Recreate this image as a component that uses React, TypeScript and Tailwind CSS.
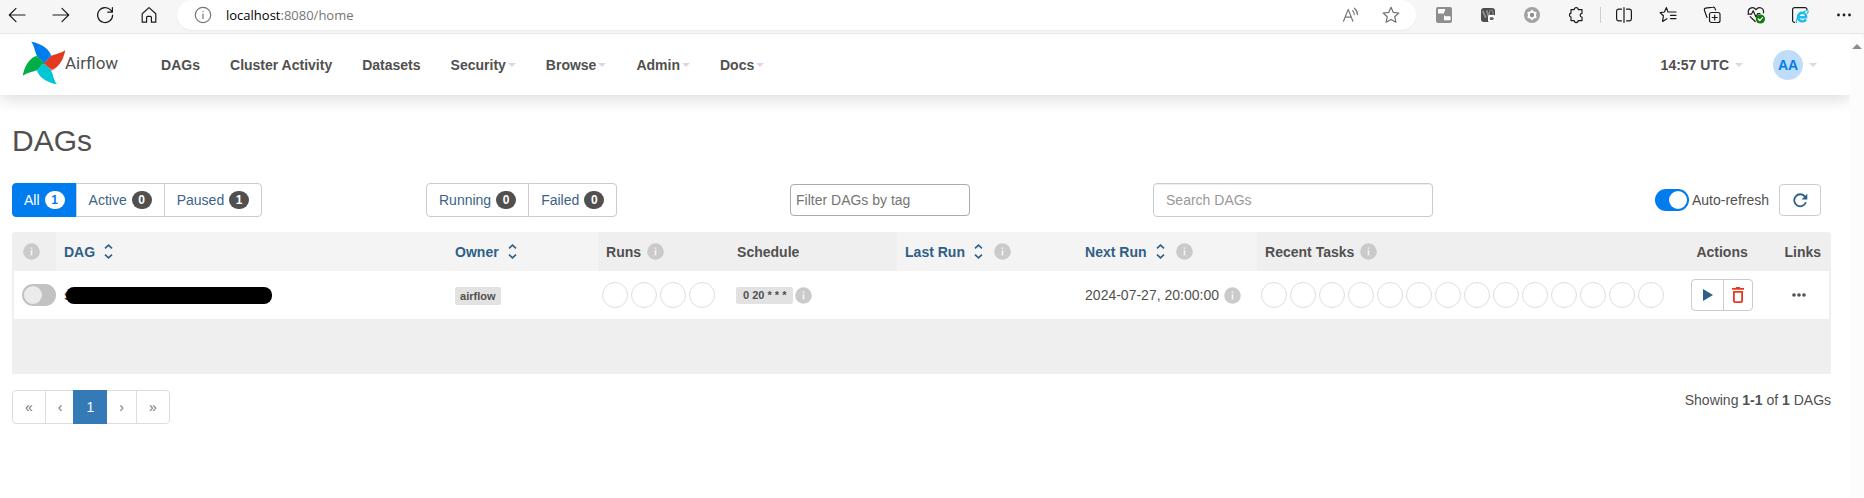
import React from "react";

const caretColor = "#e3d3e6";

function Caret() {
  return (
    <svg width="8" height="4" viewBox="0 0 8 4" aria-hidden="true">
      <path d="M0 0H8L4 4Z" fill={caretColor} />
    </svg>
  );
}

function Info() {
  return (
    <svg width="17" height="17" viewBox="0 0 17 17" className="shrink-0" aria-hidden="true">
      <circle cx="8.5" cy="8.5" r="8.3" fill="#cacaca" />
      <path d="M7.7 4.4h1.6v1.6H7.7zM7.7 7.2h1.6v5.2H7.7z" fill="#f4f4f4" />
    </svg>
  );
}

function SortIcon() {
  return (
    <svg width="9" height="15" viewBox="0 0 9 15" fill="none" stroke="#2f5f86" strokeWidth="1.6" aria-hidden="true">
      <path d="M1 4.4 4.5 1.2 8 4.4M1 10.6 4.5 13.8 8 10.6" />
    </svg>
  );
}

function Pinwheel() {
  const blades = [
    { angle: 0, dark: "#017cee", light: "#11a7fb" },
    { angle: 90, dark: "#e43921", light: "#ff7557" },
    { angle: 180, dark: "#00c7d4", light: "#0fdcea" },
    { angle: 270, dark: "#00ad46", light: "#04d659" },
  ];
  return (
    <svg width="44" height="44" viewBox="-22 -22 44 44" aria-hidden="true">
      {blades.map((b) => (
        <path key={b.angle} transform={`rotate(${b.angle})`} d="M0 0C3 -2.5 5 -5.5 6.2 -9.4C8.8 -6.5 8.8 -3.4 7.4 -0.8Z" fill={b.light} />
      ))}
      {blades.map((b) => (
        <path key={b.angle} transform={`rotate(${b.angle})`} d="M0 0C-1.5 -3.2 -5 -4 -7 -7.2C-9.2 -11 -9 -15.5 -12.7 -21.2C-5 -20 3.5 -15.6 6.4 -9.2C6 -6 3.4 -3 0 0Z" fill={b.dark} />
      ))}
      <circle r="0.8" fill="#51504f" />
    </svg>
  );
}

function NavItem({ label, menu }: { label: string; menu?: boolean }) {
  return (
    <a href="#" className="flex items-center gap-0.5 px-[15px]">
      {label}
      {menu && <Caret />}
    </a>
  );
}

function Badge({ n, active }: { n: number; active?: boolean }) {
  return (
    <span
      className={
        active
          ? "flex h-[18px] min-w-5 items-center justify-center rounded-full bg-white text-xs font-bold text-[#017cee]"
          : "flex h-[18px] min-w-5 items-center justify-center rounded-full bg-[#51504f] text-xs font-bold text-white"
      }
    >
      {n}
    </span>
  );
}

function FilterGroup({ items }: { items: { label: string; n: number; active?: boolean }[] }) {
  return (
    <div className="inline-flex h-[34px]">
      {items.map((it) => (
        <a
          href="#"
          key={it.label}
          className={
            it.active
              ? "flex items-center gap-[5px] rounded-l border border-[#017cee] bg-[#017cee] px-[11px] text-white"
              : "-ml-px flex items-center gap-[5px] border border-[#ccc] px-3 text-[#3b6486] first:ml-0 first:rounded-l last:rounded-r"
          }
        >
          {it.label}
          <Badge n={it.n} active={it.active} />
        </a>
      ))}
    </div>
  );
}

function Circles({ count }: { count: number }) {
  return (
    <div className="flex gap-[3px]">
      {Array.from({ length: count }, (_, i) => (
        <span key={i} className="size-[26px] shrink-0 rounded-full border border-[#dedede]" />
      ))}
    </div>
  );
}

function SortHead({ label, info }: { label: string; info?: boolean }) {
  return (
    <th className="bg-[#f4f4f4] px-2 text-left">
      <a href="#" className="flex items-center text-[#2f5f86]">
        <span className="mr-[9px]">{label}</span>
        <SortIcon />
        {info && <span className="ml-[11px]"><Info /></span>}
      </a>
    </th>
  );
}

function Glyph({ children, label, color = "#1b1b1b" }: { children: React.ReactNode; label: string; color?: string }) {
  return (
    <button aria-label={label} className="shrink-0">
      <svg width="18" height="18" viewBox="0 0 18 18" fill="none" stroke={color} strokeWidth="1.2" strokeLinejoin="round" strokeLinecap="round">
        {children}
      </svg>
    </button>
  );
}

function BrowserBar() {
  return (
    <div className="flex h-[34px] items-start border-b border-[#e8e8e8] bg-[#f6f6f6]">
      <div className="flex h-[30px] items-center gap-[26px] pl-2">
        <Glyph label="Back"><path d="M17 9H1.5M8 2.3 1.3 9 8 15.7" /></Glyph>
        <Glyph label="Forward"><path d="M1 9H16.5M10 2.3 16.7 9 10 15.7" /></Glyph>
        <Glyph label="Reload"><path d="M16.6 9A7.5 7.5 0 1 1 14.8 4.2L16.2 6M16.4 1.6V6.2H11.8" /></Glyph>
        <Glyph label="Home"><path d="M2.2 7.8 9 1.6 15.8 7.8V16.2H11.4V11.4A1 1 0 0 0 10.4 10.4H7.6A1 1 0 0 0 6.6 11.4V16.2H2.2Z" /></Glyph>
      </div>
      <div className="ml-[19px] mr-1.5 flex h-[30px] grow items-center rounded-[15px] bg-white pl-[17px] pr-4 shadow-xs">
        <Glyph label="Site information" color="#757575"><circle cx="9" cy="9" r="7.7" /><path d="M9 8V12.6M9 5.4V5.6" /></Glyph>
        <div className="ml-3.5 grow font-['Open_Sans',sans-serif] text-[13px] text-[#767676]">
          <span className="text-black">localhost</span>:8080/home
        </div>
        <div className="flex gap-[22px]">
          <Glyph label="Read aloud" color="#767676"><path d="M1.5 15.2 6.2 3.4 10.9 15.2M3 11.2H9.4M10.6 4.6A5 5 0 0 1 12.2 8.6M12.4 2.2A8 8 0 0 1 15.4 8.6" /></Glyph>
          <Glyph label="Add to favorites" color="#707070"><path d="M9 1.3 11.3 6.4 16.8 7 12.7 10.7 13.9 16.2 9 13.4 4.1 16.2 5.3 10.7 1.2 7 6.7 6.4Z" /></Glyph>
        </div>
      </div>
      <div className="flex h-[30px] items-center">
        <div className="flex w-11 justify-center">
          <Glyph label="Screen extension" color="none"><rect x="1" y="1" width="16" height="16" rx="2" fill="#8e8e8e" /><path d="M3 3h7v2.5h-1v2H3zM9 9.5h1v.8h5.5v4H9z" fill="#fff" /></Glyph>
        </div>
        <div className="flex w-11 justify-center">
          <Glyph label="Video extension" color="none"><rect x="2" y="2" width="14" height="14" rx="3" fill="#4d4d4d" /><path d="M4 5.5 6.4 11M8 5 9.4 10" stroke="#8c8c8c" strokeWidth="2" /><ellipse cx="12.2" cy="7" rx="1.8" ry="3" stroke="#8c8c8c" /><rect x="9" y="9" width="7.5" height="7" rx="1.5" fill="#fff" /><path d="M10.8 11.2h3l1.3 1.3-1.3 1.4h-3z" fill="#666" /></Glyph>
        </div>
        <div className="flex w-11 justify-center">
          <Glyph label="Gear extension" color="none"><circle cx="9" cy="9" r="8" fill="#a3a3a3" /><path d="M9 4.5 10.6 6.1 13 6.6 12.3 9 13 11.4 10.6 11.9 9 13.5 7.4 11.9 5 11.4 5.7 9 5 6.6 7.4 6.1Z" fill="#fff" stroke="#fff" /><circle cx="9" cy="9" r="2.2" fill="#8e8e8e" /></Glyph>
        </div>
        <div className="flex w-11 justify-center">
          <Glyph label="Extensions"><path d="M4 3.6H7.2A2 2 0 0 1 11.2 3.6H15V7.3A1.6 1.6 0 1 0 15 11V14.6H11.2A2 2 0 0 1 7.2 14.6H4V11A2 2 0 0 1 4 7.1Z" /></Glyph>
        </div>
        <div className="flex w-1 justify-center"><span className="h-4 w-px bg-[#cfcfcf]" /></div>
        <div className="flex w-11 justify-center">
          <Glyph label="Split screen"><path d="M6.5 3.2H3.5A2 2 0 0 0 1.6 5.2V12.8A2 2 0 0 0 3.5 14.8H6.5M11.5 3.2H14.5A2 2 0 0 1 16.4 5.2V12.8A2 2 0 0 1 14.5 14.8H11.5M9 1.5V16.5" /></Glyph>
        </div>
        <div className="flex w-11 justify-center">
          <Glyph label="Favorites"><path d="M10 6H17M11.5 9.3H17M11.5 12.6H17M9 6 7.4 1.6 5.4 6 1.2 6.7 4.4 9.8 3.6 15.4 8 12.8" /></Glyph>
        </div>
        <div className="flex w-11 justify-center">
          <Glyph label="Collections"><rect x="6.5" y="6.5" width="10.5" height="10" rx="2" /><path d="M11.7 9V14M9.2 11.5H14.2M4 11.5 1.4 4.3A1.8 1.8 0 0 1 2.5 2.1L10 1.2A1.8 1.8 0 0 1 12 2.4L12.6 4" /></Glyph>
        </div>
        <div className="flex w-11 justify-center">
          <Glyph label="Browser essentials"><path d="M1.5 7.5C0 2 6 0 9 3.6C12 0 17.5 2 16.4 6.8M3.2 10.6 8.2 15.5M1 8.2H4.4L6.2 4.8 9 11 10.8 7.6H13" /><circle cx="13.4" cy="13" r="4.6" fill="#107c10" stroke="none" /><path d="M11.3 13 12.8 14.5 15.5 11.7" stroke="#fff" /></Glyph>
        </div>
        <div className="flex w-11 justify-center">
          <Glyph label="Internet Explorer mode"><path d="M3.6 16.4A2 2 0 0 1 1.6 14.4V3.6A2 2 0 0 1 3.6 1.6H14A2 2 0 0 1 16 3.6" /><path d="M7.2 11.2H15.2C15.2 5.4 7 5.4 7 11C7 16 13.4 16.4 15 13.4" stroke="#1ebbee" strokeWidth="2.4" strokeLinecap="butt" /><path d="M5.4 16.6C4.8 11.5 12 4 17 4.8C17.4 5.4 17 6.6 16.4 7.4" stroke="#1ebbee" strokeWidth="1.1" /></Glyph>
        </div>
        <div className="flex w-[42px] justify-center">
          <Glyph label="More" color="none"><g fill="#1b1b1b"><circle cx="4.5" cy="9" r="1.4" /><circle cx="10" cy="9" r="1.4" /><circle cx="15.5" cy="9" r="1.4" /></g></Glyph>
        </div>
      </div>
    </div>
  );
}

const pages = ["«", "‹", "1", "›", "»"];

export default function App() {
  return (
    <div className="flex min-h-screen flex-col bg-[#f6f6f6] font-['Liberation_Sans',Arial,sans-serif] text-sm leading-5 text-[#51504f]">
      <BrowserBar />
      <div className="flex grow overflow-hidden rounded-tr-md bg-white">
        <div className="min-w-0 grow">
          <header className="flex h-[61px] items-center bg-white pl-[22px] pr-[33px] font-bold shadow-[0_5px_14px_rgba(0,0,0,0.13)]">
            <a href="#" className="mb-1 mr-7 flex items-center font-['Roboto',sans-serif] text-[17px] font-normal">
              <Pinwheel />
              <span className="-ml-px">Airflow</span>
            </a>
            <nav className="flex">
              <NavItem label="DAGs" />
              <NavItem label="Cluster Activity" />
              <NavItem label="Datasets" />
              <NavItem label="Security" menu />
              <NavItem label="Browse" menu />
              <NavItem label="Admin" menu />
              <NavItem label="Docs" menu />
            </nav>
            <div className="ml-auto flex items-center gap-[30px]">
              <button className="flex items-center gap-1.5 font-bold">14:57 UTC <Caret /></button>
              <button className="flex items-center gap-1.5 font-bold">
                <span className="flex size-[30px] items-center justify-center rounded-full bg-[#bfddfb] text-[#017cee]">AA</span>
                <Caret />
              </button>
            </div>
          </header>

          <main className="pl-3 pr-[19px] pt-7">
            <h1 className="text-[30px] leading-9">DAGs</h1>

            <div className="mt-6 grid grid-cols-[414fr_364fr_363fr_678fr] items-center">
              <div className="flex"><FilterGroup items={[{ label: "All", n: 1, active: true }, { label: "Active", n: 0 }, { label: "Paused", n: 1 }]} /></div>
              <div className="flex"><FilterGroup items={[{ label: "Running", n: 0 }, { label: "Failed", n: 0 }]} /></div>
              <input aria-label="Filter DAGs by tag" placeholder="Filter DAGs by tag" className="h-8 w-[180px] rounded border border-[#aaa] px-[5px] placeholder:text-[#757575]" />
              <div className="flex items-center">
                <input aria-label="Search DAGs" placeholder="Search DAGs" className="h-[34px] w-[280px] rounded border border-[#ccc] px-3 shadow-[inset_0_1px_1px_rgba(0,0,0,0.075)] placeholder:text-[#999]" />
                <label className="ml-auto flex items-center gap-[3px]">
                  <input type="checkbox" defaultChecked className="flex h-[22px] w-[34px] appearance-none items-center justify-end rounded-full bg-[#017cee] px-0.5 before:size-[18px] before:rounded-full before:bg-white before:content-['']" />
                  Auto-refresh
                </label>
                <button aria-label="Refresh" className="mx-2.5 flex h-8 w-[42px] items-center justify-center rounded border border-[#ccc]">
                  <svg width="15" height="15" viewBox="0 0 15 15" fill="none" stroke="#2f5f86" strokeWidth="1.8">
                    <path d="M12.9 9.3A6 6 0 1 1 12 3.6" />
                    <path d="M14.3 0.8V6.5H8.6Z" fill="#2f5f86" stroke="none" />
                  </svg>
                </button>
              </div>
            </div>

            <div className="mt-[15px] overflow-hidden rounded-t bg-[#efefef] pb-[55px]">
              <table className="w-full table-fixed border-separate border-spacing-0 border-x-2 border-[#efefef]">
                <colgroup>
                  <col className="w-[42px]" />
                  <col />
                  <col className="w-[151px]" />
                  <col className="w-[131px]" />
                  <col className="w-[168px]" />
                  <col className="w-[180px]" />
                  <col className="w-[180px]" />
                  <col className="w-[426px]" />
                  <col className="w-[78px]" />
                  <col className="w-[68px]" />
                </colgroup>
                <thead>
                  <tr className="h-[39px]">
                    <th className="pl-[9px]"><Info /></th>
                    <SortHead label="DAG" />
                    <SortHead label="Owner" />
                    <th className="px-2"><div className="flex items-center gap-1.5">Runs <Info /></div></th>
                    <th className="px-2 text-left">Schedule</th>
                    <SortHead label="Last Run" info />
                    <SortHead label="Next Run" info />
                    <th className="px-2"><div className="flex items-center gap-1.5">Recent Tasks <Info /></div></th>
                    <th>Actions</th>
                    <th className="pr-2 text-right">Links</th>
                  </tr>
                </thead>
                <tbody className="bg-white">
                  <tr className="h-12">
                    <td className="pl-2">
                      <input type="checkbox" aria-label="Unpause DAG" className="flex h-[22px] w-[34px] appearance-none items-center rounded-full bg-[#c4c2c1] px-0.5 before:size-[18px] before:rounded-full before:bg-[#ebebeb] before:content-['']" />
                    </td>
                    <td className="px-2">
                      <div className="flex items-center">
                        <b>s</b>
                        <span className="z-10 -ml-1.5 h-[17px] w-[206px] rounded-lg bg-black" />
                      </div>
                    </td>
                    <td className="px-2">
                      <a href="#" className="inline-flex h-[18px] items-center rounded-xs bg-[#e2e2e2] px-[5px] text-[11px] font-bold leading-4">airflow</a>
                    </td>
                    <td className="pl-1"><Circles count={4} /></td>
                    <td className="px-[7px]">
                      <div className="flex items-center gap-0.5">
                        <a href="#" className="inline-flex h-[17px] items-center rounded-xs bg-[#e2e2e2] px-[7px] text-[11px] font-bold leading-4">0 20 * * *</a>
                        <Info />
                      </div>
                    </td>
                    <td />
                    <td className="pl-2">
                      <div className="flex items-center gap-[5px] whitespace-nowrap">2024-07-27, 20:00:00 <Info /></div>
                    </td>
                    <td className="pl-1"><Circles count={14} /></td>
                    <td>
                      <div className="mx-auto flex h-8 w-[62px] rounded border border-[#ccc]">
                        <button aria-label="Trigger DAG" className="flex flex-1 items-center justify-center border-r border-[#ccc] pl-0.5">
                          <svg width="10" height="12" viewBox="0 0 10 12"><path d="M0 0 10 6 0 12Z" fill="#2f5f86" /></svg>
                        </button>
                        <button aria-label="Delete DAG" className="flex flex-1 items-center justify-center">
                          <svg width="12" height="16" viewBox="0 0 12 16" fill="#e43921">
                            <path d="M0 1H3.5L4.3 0H7.7L8.5 1H12V2.8H0Z" />
                            <path fillRule="evenodd" d="M1 4H11V14A2 2 0 0 1 9 16H3A2 2 0 0 1 1 14ZM2.8 5.8V14.2H9.2V5.8Z" />
                          </svg>
                        </button>
                      </div>
                    </td>
                    <td>
                      <button aria-label="Links" className="mx-auto block pl-2">
                        <svg width="14" height="4" viewBox="0 0 14 4" fill="#51504f"><circle cx="2" cy="2" r="1.8" /><circle cx="7" cy="2" r="1.8" /><circle cx="12" cy="2" r="1.8" /></svg>
                      </button>
                    </td>
                  </tr>
                </tbody>
              </table>
            </div>

            <div className="mt-4 flex items-start justify-between">
              <nav aria-label="Pages" className="flex h-[34px] rounded border border-[#ddd]">
                {pages.map((p, i) => (
                  <a
                    href="#"
                    key={p}
                    className={
                      p === "1"
                        ? "-my-px -ml-px flex items-center bg-[#337ab7] px-[13px] text-white"
                        : i === 1 || i === 4
                          ? "flex items-center border-l border-[#ddd] px-3 text-[#777]"
                          : "flex items-center px-3 text-[#777]"
                    }
                  >
                    {p}
                  </a>
                ))}
              </nav>
              <p>Showing <b>1-1</b> of <b>1</b> DAGs</p>
            </div>
          </main>
        </div>
        <div className="flex w-3.5 shrink-0 justify-center bg-[#fcfcfc] pt-2.5">
          <svg width="10" height="5" viewBox="0 0 10 5"><path d="M5 0 10 5H0Z" fill="#8b8b8b" /></svg>
        </div>
      </div>
    </div>
  );
}
